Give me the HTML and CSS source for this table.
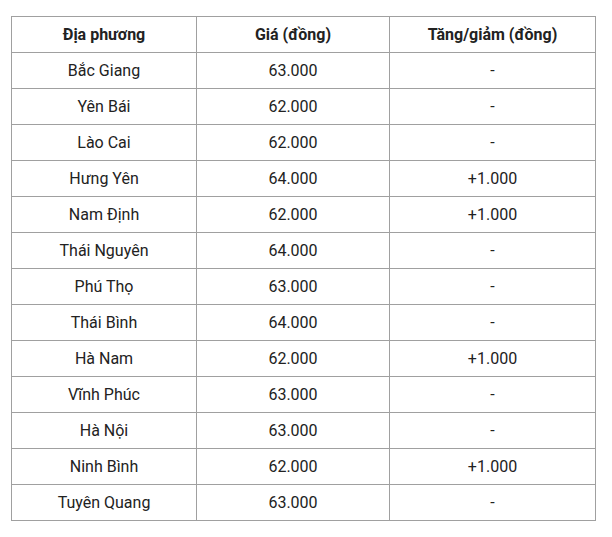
FILE: index.html
```html
<!DOCTYPE html>
<html lang="vi">
<head>
<meta charset="utf-8">
<link rel="stylesheet" href="styles.css">
</head>
<body>
<table class="price-table">
  <colgroup>
    <col class="c1">
    <col class="c2">
    <col class="c3">
  </colgroup>
  <thead>
    <tr><th>Địa phương</th><th>Giá (đồng)</th><th>Tăng/giảm (đồng)</th></tr>
  </thead>
  <tbody>
    <tr><td>Bắc Giang</td><td>63.000</td><td>-</td></tr>
    <tr><td>Yên Bái</td><td>62.000</td><td>-</td></tr>
    <tr><td>Lào Cai</td><td>62.000</td><td>-</td></tr>
    <tr><td>Hưng Yên</td><td>64.000</td><td>+1.000</td></tr>
    <tr><td>Nam Định</td><td>62.000</td><td>+1.000</td></tr>
    <tr><td>Thái Nguyên</td><td>64.000</td><td>-</td></tr>
    <tr><td>Phú Thọ</td><td>63.000</td><td>-</td></tr>
    <tr><td>Thái Bình</td><td>64.000</td><td>-</td></tr>
    <tr><td>Hà Nam</td><td>62.000</td><td>+1.000</td></tr>
    <tr><td>Vĩnh Phúc</td><td>63.000</td><td>-</td></tr>
    <tr><td>Hà Nội</td><td>63.000</td><td>-</td></tr>
    <tr><td>Ninh Bình</td><td>62.000</td><td>+1.000</td></tr>
    <tr><td>Tuyên Quang</td><td>63.000</td><td>-</td></tr>
  </tbody>
</table>
</body>
</html>
```
FILE: styles.css
```css
html, body {
  margin: 0;
  background: #ffffff;
}
body {
  padding: 16px 16px 0 11px;
  font-family: Roboto, "Liberation Sans", sans-serif;
  font-size: 16px;
  color: #222222;
}
.price-table {
  width: 585px;
  border-collapse: collapse;
  table-layout: fixed;
}
.c1 { width: 185px; }
.c2 { width: 193px; }
.c3 { width: 206px; }
.price-table th,
.price-table td {
  border: 1px solid #a0a0a0;
  height: 36px;
  padding: 0 8px;
  text-align: center;
  vertical-align: middle;
  line-height: 20px;
  box-sizing: border-box;
}
.price-table th {
  font-weight: 700;
}
```
